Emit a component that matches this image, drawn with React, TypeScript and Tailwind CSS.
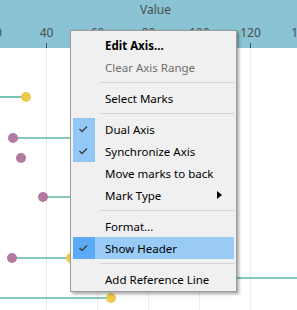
import { ReactNode } from "react"

const ticks = [
  { x: -5, label: "20" },
  { x: 46.5, label: "40" },
  { x: 97.5, label: "60" },
  { x: 148.5, label: "80" },
  { x: 199.5, label: "100" },
  { x: 250.5, label: "120" },
  { x: 301.5, label: "140" },
]

const YELLOW = "#eec94b"
const PURPLE = "#b07aa1"
const TEAL = "#5db4a6"

function Check() {
  return (
    <svg width="22" height="22" viewBox="0 0 22 22">
      <polyline points="6.5,11 9,13.5 14,8.5" fill="none" stroke="#3c3c3c" strokeWidth="1.3" />
    </svg>
  )
}

function Row({
  label,
  checked,
  active,
  bold,
  disabled,
  submenu,
}: {
  label: string
  checked?: boolean
  active?: boolean
  bold?: boolean
  disabled?: boolean
  submenu?: boolean
}) {
  return (
    <div className={`flex h-[22px] items-center ${active ? "bg-[#99cbf6]" : ""}`}>
      <div
        className={`h-[22px] w-[22px] shrink-0 ${
          active ? "bg-[#5aaaf6]" : checked ? "bg-[#92c7f6]" : ""
        }`}
      >
        {checked && <Check />}
      </div>
      <span
        className={`ml-[10px] flex-1 pt-px ${bold ? "font-bold" : ""} ${
          disabled ? "text-[#6f6f6f]" : "text-black"
        }`}
      >
        {label}
      </span>
      {submenu && (
        <svg width="5" height="8" viewBox="0 0 5 8" className="mr-[12px]">
          <polygon points="0,0 5,4 0,8" fill="#000" />
        </svg>
      )}
    </div>
  )
}

function Sep() {
  return (
    <div className="flex h-[9px] items-center pl-[27px]">
      <div className="h-px flex-1 bg-[#d4d4d4]" />
    </div>
  )
}

function Dot({ x, y, c }: { x: number; y: number; c: string }) {
  return <circle cx={x} cy={y} r="5" fill={c} />
}

function Line({ x1, x2, y }: { x1: number; x2: number; y: number }): ReactNode {
  return <line x1={x1} x2={x2} y1={y} y2={y} stroke={TEAL} strokeWidth="1.6" />
}

export default function App() {
  return (
    <div
      className="relative h-[310px] w-[297px] overflow-hidden bg-white text-[11.5px]"
      style={{ fontFamily: '"Segoe UI", "Noto Sans", "Open Sans", sans-serif' }}
    >
      {/* axis header */}
      <div className="flex h-[48px] flex-col bg-[#8ac3d3]">
        <div className="h-[18px] pl-[14px] pt-px text-center text-[12px] leading-[18px] text-[#4d4d4d]">Value</div>
        <svg width="297" height="30" className="block">
          {ticks.map((t) => (
            <g key={t.label}>
              <text
                x={t.x}
                y="18.5"
                textAnchor="middle"
                fontSize="12"
                fill="#4d4d4d"
                fontFamily='"Segoe UI", "Noto Sans", sans-serif'
              >
                {t.label}
              </text>
              <line x1={t.x} x2={t.x} y1="25" y2="30" stroke="#4d4d4d" strokeWidth="1" />
            </g>
          ))}
        </svg>
      </div>

      {/* plot */}
      <svg width="297" height="262" className="block">
        {ticks.map((t) => (
          <line key={t.label} x1={t.x} x2={t.x} y1="0" y2="262" stroke="#ececec" strokeWidth="1" />
        ))}
        <Line x1={0} x2={26} y={49} />
        <Dot x={26} y={49} c={YELLOW} />
        <Line x1={13} x2={90} y={90} />
        <Dot x={13} y={90} c={PURPLE} />
        <Dot x={21} y={110} c={PURPLE} />
        <Line x1={43} x2={90} y={149} />
        <Dot x={43} y={149} c={PURPLE} />
        <Line x1={12} x2={71} y={210} />
        <Dot x={12} y={210} c={PURPLE} />
        <Dot x={71} y={210} c={YELLOW} />
        <Line x1={200} x2={297} y={230} />
        <Line x1={0} x2={111} y={250} />
        <Dot x={111} y={250} c={YELLOW} />
      </svg>

      {/* context menu */}
      <div className="absolute left-[70px] top-[30px] w-[167px] border border-[#9c9c9c] bg-[#f0f0f0] px-[2px] pb-[1px] pt-[3px] shadow-[2px_2px_3px_rgba(0,0,0,0.35)]">
        <Row label="Edit Axis..." bold />
        <Row label="Clear Axis Range" disabled />
        <Sep />
        <Row label="Select Marks" />
        <Sep />
        <Row label="Dual Axis" checked />
        <Row label="Synchronize Axis" checked />
        <Row label="Move marks to back" />
        <Row label="Mark Type" submenu />
        <Sep />
        <Row label="Format..." />
        <Row label="Show Header" checked active />
        <Sep />
        <Row label="Add Reference Line" />
      </div>
    </div>
  )
}
